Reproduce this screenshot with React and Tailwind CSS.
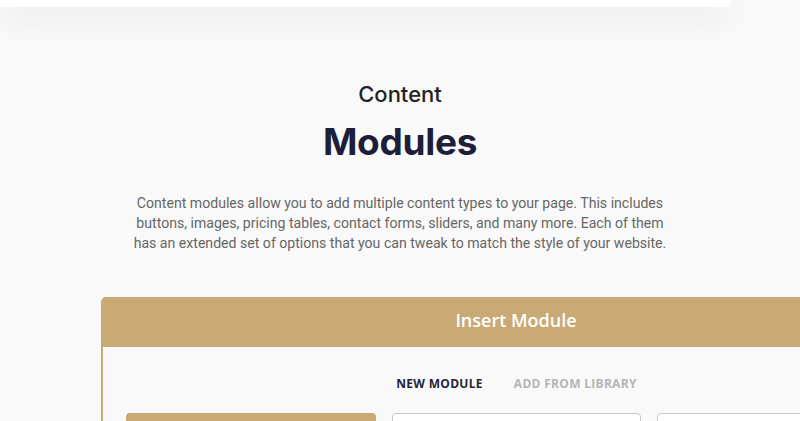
export default function App() {
  return (
    <div className="w-[800px] h-[421px] overflow-hidden bg-[#f9f9f9] relative" style={{ fontFamily: '"Open Sans", sans-serif' }}>
      <div className="h-[7px] w-[731px] bg-white rounded-br-[6px] shadow-[0_8px_32px_rgba(0,0,0,0.17)] relative z-10" />
      <div className="flex flex-col items-center">
        <h3 className="mt-[73px] text-[22px] leading-[28px] text-[#222] font-medium" style={{ fontFamily: 'Inter, sans-serif' }}>Content</h3>
        <h2 className="mt-[13px] text-[37px] leading-[42px] font-bold text-[#1d1e3a] tracking-[-0.3px]" style={{ fontFamily: 'Inter, sans-serif' }}>Modules</h2>
        <p className="mt-[30px] w-[545px] text-center text-[14.1px] leading-[20px] text-[#666]" style={{ fontFamily: 'Roboto, sans-serif' }}>
          Content modules allow you to add multiple content types to your page. This includes buttons, images, pricing tables, contact forms, sliders, and many more. Each of them has an extended set of options that you can tweak to match the style of your website.
        </p>
      </div>
      <div className="mt-[44px] pl-[101px] flex">
        <div className="w-[830px] shrink-0 rounded-t-[5px] overflow-hidden">
          <div className="h-[50px] bg-[#c9aa74] pt-[11px] text-center text-white text-[18px] leading-[24px] font-semibold">Insert Module</div>
          <div className="border-l-2 border-[#c9aa74] bg-[#f9f9f9] pl-[23px] pr-[24px]">
            <div className="flex justify-center gap-[31px] pt-[28px] text-[12px] font-bold tracking-[0.3px]">
              <span className="text-[#24253a]">NEW MODULE</span>
              <span className="text-[#b5b5b5]">ADD FROM LIBRARY</span>
            </div>
            <div className="grid grid-cols-3 gap-[16px] mt-[20px]">
              <div className="h-[60px] rounded-[4px] bg-[#c9aa74]" />
              <div className="h-[60px] rounded-[4px] bg-white border border-[#c8c8c8]" />
              <div className="h-[60px] rounded-[4px] bg-white border border-[#c8c8c8]" />
            </div>
          </div>
        </div>
      </div>
    </div>
  );
}
